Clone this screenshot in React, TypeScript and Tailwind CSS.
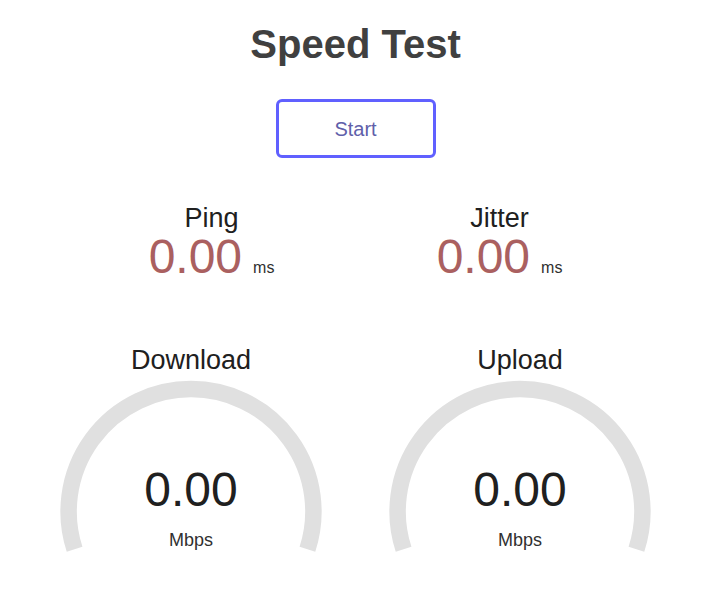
const FONT = { fontFamily: '"Liberation Sans", Arial, sans-serif' }

function Stat({ label, value, unit }: { label: string; value: string; unit: string }) {
  return (
    <div className="w-[280px] flex flex-col items-center">
      <div className="text-[27px] leading-[28px] text-[#202020]">{label}</div>
      <div className="mt-[2px] text-[48px] leading-[46px] text-[#aa6060]">
        <span>{value}</span>
        <span className="ml-[11px] text-[16px] leading-none text-[#303030]">{unit}</span>
      </div>
    </div>
  )
}

function Gauge({ label, value }: { label: string; value: string }) {
  const cx = 160
  const cy = 170.5
  const r = 122.4
  const dx = r * Math.cos(0.1 * Math.PI)
  const dy = r * Math.sin(0.1 * Math.PI)
  const d = `M ${cx - dx} ${cy + dy} A ${r} ${r} 0 1 1 ${cx + dx} ${cy + dy}`

  return (
    <div className="relative w-[320px] h-[250px] flex flex-col items-center">
      <svg className="absolute inset-0" width="320" height="250" viewBox="0 0 320 250">
        <path d={d} fill="none" stroke="#e0e0e0" strokeWidth="16.5" />
      </svg>
      <div className="relative mt-[5px] text-[27px] leading-[28px] text-[#202020]">{label}</div>
      <div className="relative mt-[93px] text-[48px] leading-[46px] text-[#202020]">{value}</div>
      <div className="relative mt-[17px] text-[18px] leading-[20px] text-[#303030]">Mbps</div>
    </div>
  )
}

export default function App() {
  return (
    <div className="w-full min-h-[598px] bg-white text-center" style={FONT}>
      <h1 className="pt-[21px] text-[40px] leading-[46px] font-bold text-[#404040]">Speed Test</h1>

      <div className="mt-[32px] flex justify-center">
        <button className="w-[160px] h-[59px] flex items-center justify-center border-[3px] border-[#6060ff] rounded-[6px] text-[20px] text-[#6060aa] bg-transparent">
          Start
        </button>
      </div>

      <div className="mt-[46px] flex justify-center gap-[8px]">
        <Stat label="Ping" value="0.00" unit="ms" />
        <Stat label="Jitter" value="0.00" unit="ms" />
      </div>

      <div className="mt-[61px] flex justify-center gap-[9px]">
        <Gauge label="Download" value="0.00" />
        <Gauge label="Upload" value="0.00" />
      </div>
    </div>
  )
}
